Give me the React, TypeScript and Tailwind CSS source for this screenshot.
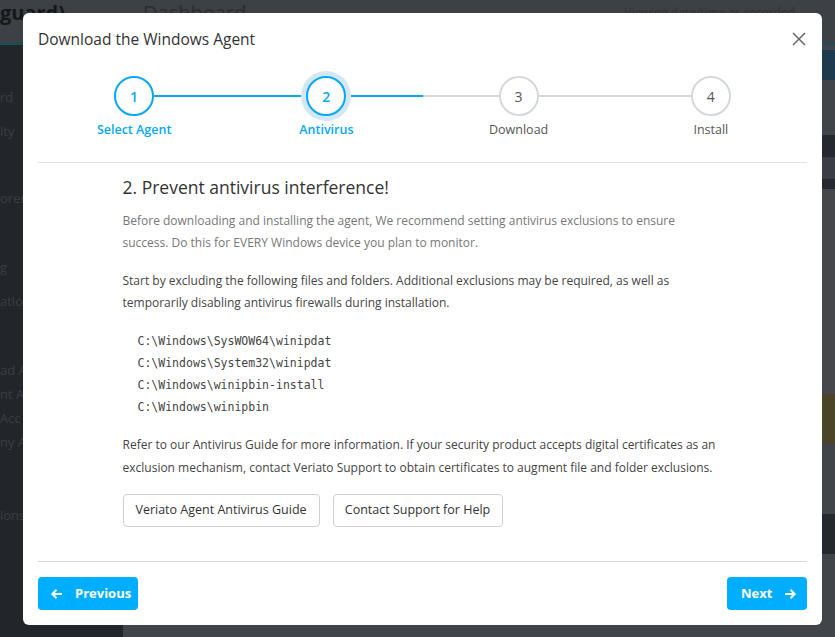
import React from "react";

const steps = [
  { n: 1, label: "Select Agent", state: "done" },
  { n: 2, label: "Antivirus", state: "active" },
  { n: 3, label: "Download", state: "todo" },
  { n: 4, label: "Install", state: "todo" },
];

function Stepper() {
  return (
    <div className="grid grid-cols-4 pt-[11px] pb-[23px]">
      {steps.map((s, i) => {
        const leftBlue = i <= 1;
        const rightBlue = i <= 1;
        const blue = s.state !== "todo";
        return (
          <div key={s.n} className="flex flex-col items-center">
            <div className="relative flex h-[40px] w-full items-center justify-center">
              {i > 0 && (
                <div
                  className={`absolute left-0 right-1/2 top-[19px] h-[2px] ${leftBlue ? "bg-[#03a9f4]" : "bg-[#d4d7db]"}`}
                />
              )}
              {i < steps.length - 1 && (
                <div
                  className={`absolute left-1/2 right-0 top-[19px] h-[2px] ${rightBlue ? "bg-[#03a9f4]" : "bg-[#d4d7db]"}`}
                />
              )}
              {s.state === "active" && (
                <div className="absolute h-[50px] w-[50px] rounded-full bg-[#d3e7f8]" />
              )}
              <div
                className={`relative z-10 flex h-[40px] w-[40px] items-center justify-center rounded-full border-2 bg-white text-[14px] ${
                  blue ? "border-[#03a9f4] font-semibold text-[#03a9f4]" : "border-[#d4d7db] text-[#555]"
                }`}
              >
                {s.n}
              </div>
            </div>
            <div
              className={`mt-[5px] text-[12.5px] leading-[18px] ${blue ? "font-semibold text-[#03a9f4]" : "text-[#555]"}`}
            >
              {s.label}
            </div>
          </div>
        );
      })}
    </div>
  );
}

function Background() {
  const side = [
    { t: "rd", y: 43 },
    { t: "ity", y: 77 },
    { t: "orer", y: 144 },
    { t: "g", y: 213 },
    { t: "ation", y: 247 },
    { t: "ad A", y: 316 },
    { t: "nt Ag", y: 340 },
    { t: "Acc", y: 364 },
    { t: "ny A", y: 388 },
    { t: "ions", y: 461 },
  ];
  return (
    <div className="flex h-[637px] w-[835px] flex-col bg-[#414448]">
      <div className="flex h-[42px] items-start bg-[#3d4044]">
        <div className="w-[123px] pt-[1px] text-[20px] font-bold leading-[24px] text-[#151719] [font-family:'Open_Sans',sans-serif]">
          guard)
        </div>
        <div className="pl-[20px] pt-[1px] text-[20px] leading-[24px] text-[#2a2d31] [font-family:'Open_Sans',sans-serif]">
          Dashboard
        </div>
        <div className="ml-auto pr-[40px] pt-[4px] text-[12px] text-[#2e3135] [font-family:'Open_Sans',sans-serif]">
          Viewing date/time as recorded
        </div>
      </div>
      <div className="h-[3px] bg-[#1f4d52]" />
      <div className="flex flex-1">
        <div className="relative w-[123px] bg-[#22262b]">
          {side.map((s) => (
            <div
              key={s.t}
              className="absolute left-0 text-[13px] text-[#3a3e44] [font-family:'Open_Sans',sans-serif]"
              style={{ top: s.y }}
            >
              {s.t}
            </div>
          ))}
        </div>
        <div className="flex flex-1 justify-end">
          <div className="flex w-[13px] flex-col">
            <div className="h-[5px] bg-[#414448]" />
            <div className="h-[30px] bg-[#1e3a4e]" />
            <div className="h-[55px] bg-[#414448]" />
            <div className="h-[22px] bg-[#25292e]" />
            <div className="h-[22px] bg-[#3a3d46]" />
            <div className="h-[10px] bg-[#25292e]" />
            <div className="h-[205px] bg-[#45474b]" />
            <div className="h-[50px] bg-[#4a4428]" />
            <div className="h-[70px] bg-[#414448]" />
            <div className="h-[40px] bg-[#25292e]" />
            <div className="flex-1 bg-[#414448]" />
          </div>
        </div>
      </div>
    </div>
  );
}

export default function App() {
  return (
    <div className="relative h-[637px] w-[835px] overflow-hidden [font-family:'Open_Sans',sans-serif]">
      <Background />
      <div className="absolute left-[23px] top-[13px] flex h-[612px] w-[799px] flex-col rounded-[6px] bg-white px-[15px]">
        <div className="flex h-[52px] items-center justify-between">
          <div className="text-[15.5px] leading-[24px] text-[#333]">Download the Windows Agent</div>
          <svg width="14" height="14" viewBox="0 0 14 14" className="mr-[1px]">
            <path d="M1 1L13 13M13 1L1 13" stroke="#666" strokeWidth="1.5" />
          </svg>
        </div>
        <Stepper />
        <div className="h-px bg-[#dee2e6]" />
        <div className="mx-auto w-[600px] pt-[13px]">
          <div className="text-[17.5px] font-medium leading-[22px] text-[#333]">
            2. Prevent antivirus interference!
          </div>
          <p className="mt-[12px] text-[12px] leading-[22px] text-[#777]">
            Before downloading and installing the agent, We recommend setting antivirus exclusions to ensure
            success. Do this for EVERY Windows device you plan to monitor.
          </p>
          <p className="mt-[16px] text-[12px] leading-[22px] text-[#444]">
            Start by excluding the following files and folders. Additional exclusions may be required, as well as
            temporarily disabling antivirus firewalls during installation.
          </p>
          <div className="mt-[16px] pl-[15px] text-[11.5px] leading-[22px] text-[#444] [font-family:'DejaVu_Sans_Mono',monospace]">
            <div>C:\Windows\SysWOW64\winipdat</div>
            <div>C:\Windows\System32\winipdat</div>
            <div>C:\Windows\winipbin-install</div>
            <div>C:\Windows\winipbin</div>
          </div>
          <p className="mt-[15px] text-[12px] leading-[23px] text-[#444]">
            Refer to our Antivirus Guide for more information. If your security product accepts digital certificates as an
            exclusion mechanism, contact Veriato Support to obtain certificates to augment file and folder exclusions.
          </p>
          <div className="mt-[15px] flex gap-[13px]">
            <button className="h-[33px] w-[197px] rounded-[4px] border border-[#ccd0d4] bg-white text-[12.5px] text-[#333]">
              Veriato Agent Antivirus Guide
            </button>
            <button className="h-[33px] w-[170px] rounded-[4px] border border-[#ccd0d4] bg-white text-[12.5px] text-[#333]">
              Contact Support for Help
            </button>
          </div>
        </div>
        <div className="mt-auto h-px bg-[#d4d7db]" />
        <div className="flex items-center justify-between pb-[15px] pt-[15px]">
          <button className="flex h-[33px] w-[100px] items-center rounded-[4px] bg-[#00aeff] pl-[13px] text-[13px] font-bold text-white">
            <svg width="12" height="12" viewBox="0 0 12 12">
              <path d="M11 6H1.5M5.5 1.8L1.3 6l4.2 4.2" stroke="white" strokeWidth="2" fill="none" />
            </svg>
            <span className="ml-[12px]">Previous</span>
          </button>
          <button className="flex h-[33px] w-[80px] items-center rounded-[4px] bg-[#00aeff] pl-[14px] text-[13px] font-bold text-white">
            <span>Next</span>
            <svg width="12" height="12" viewBox="0 0 12 12" className="ml-[12px]">
              <path d="M1 6h9.5M6.5 1.8L10.7 6 6.5 10.2" stroke="white" strokeWidth="2" fill="none" />
            </svg>
          </button>
        </div>
      </div>
    </div>
  );
}
